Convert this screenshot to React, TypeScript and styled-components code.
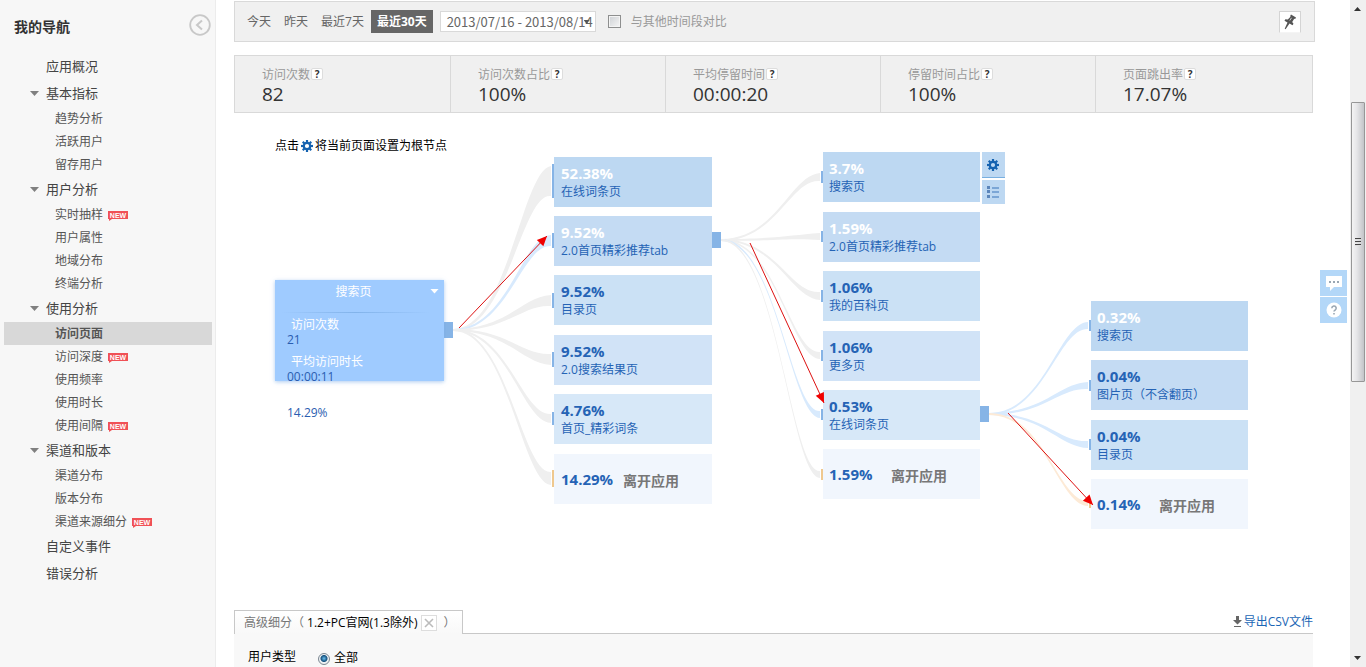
import React from 'react';
import styled, { createGlobalStyle } from 'styled-components';

const GlobalStyle = createGlobalStyle`
  * { box-sizing: border-box; }
  body {
    margin: 0;
    background: #fff;
    color: #000;
    font: 12px/15px "Open Sans", "Noto Sans CJK SC", sans-serif;
  }
  button, input { font: inherit; }
  a { color: inherit; text-decoration: none; }
`;

const Shell = styled.div`
  display: flex;
  height: 100vh;
  overflow: hidden;
`;

/* ---------- sidebar ---------- */

const Sidebar = styled.nav`
  flex: none;
  width: 216px;
  padding: 0 3px 0 4px;
  background: #f7f7f7;
  border-right: 1px solid #ececec;
`;

const SidebarHead = styled.div`
  display: flex;
  align-items: center;
  justify-content: space-between;
  height: 53px;
  padding: 0 1px 0 10px;
`;

const SidebarTitle = styled.h2`
  margin: 0;
  font-size: 14px;
  line-height: 20px;
  color: #333;
`;

const CollapseButton = styled.button`
  display: block;
  width: 22px;
  height: 22px;
  margin-bottom: 4px;
  padding: 0;
  border: 0;
  background: none;
`;

const NavList = styled.ul`
  margin: 0;
  padding: 0;
  list-style: none;
`;

const GroupLink = styled.a`
  display: flex;
  align-items: center;
  height: 27px;
  padding-left: 26px;
  gap: 6px;
  font-size: 13px;
  color: #444;
`;

const Caret = styled.span<{ $shown?: boolean }>`
  width: 9px;
  height: 5px;
  margin-right: 1px;
  background: ${(p) => (p.$shown ? '#808080' : 'transparent')};
  clip-path: polygon(0 0, 100% 0, 50% 100%);
`;

const SubLink = styled.a<{ $active?: boolean }>`
  display: flex;
  align-items: center;
  height: 23px;
  padding-left: 51px;
  gap: 5px;
  color: #555;
  font-weight: ${(p) => (p.$active ? 700 : 400)};
  background: ${(p) => (p.$active ? '#d8d8d8' : 'transparent')};
`;

const Badge = styled.svg`
  margin-top: 3px;
`;

type Group = { label: string; items?: { label: string; isNew?: boolean; active?: boolean }[] };

const groups: Group[] = [
  { label: '应用概况' },
  { label: '基本指标', items: [{ label: '趋势分析' }, { label: '活跃用户' }, { label: '留存用户' }] },
  {
    label: '用户分析',
    items: [{ label: '实时抽样', isNew: true }, { label: '用户属性' }, { label: '地域分布' }, { label: '终端分析' }],
  },
  {
    label: '使用分析',
    items: [
      { label: '访问页面', active: true },
      { label: '访问深度', isNew: true },
      { label: '使用频率' },
      { label: '使用时长' },
      { label: '使用间隔', isNew: true },
    ],
  },
  { label: '渠道和版本', items: [{ label: '渠道分布' }, { label: '版本分布' }, { label: '渠道来源细分', isNew: true }] },
  { label: '自定义事件' },
  { label: '错误分析' },
];

const NewBadge = () => (
  <Badge width="20" height="10" viewBox="0 0 20 10">
    <path d="M0 0h20v8H4l-3 2V8H0z" fill="#f05156" />
    <text x="10" y="7" fontSize="7" fontWeight="700" fill="#fff" textAnchor="middle" fontFamily="Liberation Sans, sans-serif">
      NEW
    </text>
  </Badge>
);

/* ---------- main column ---------- */

const Main = styled.main`
  flex: 1;
  min-width: 0;
  display: flex;
  flex-direction: column;
  padding: 1px 35px 0 18px;
`;

const Toolbar = styled.div`
  flex: none;
  display: flex;
  align-items: center;
  height: 41px;
  padding: 0 13px 0 6px;
  border: 1px solid #d9d9d9;
  background: #f0f0f0;
`;

const RangeButton = styled.button<{ $active?: boolean }>`
  height: 23px;
  margin-right: 1px;
  padding: 0 6px;
  border: 0;
  color: ${(p) => (p.$active ? '#fff' : '#666')};
  background: ${(p) => (p.$active ? '#666' : 'transparent')};
  font-weight: ${(p) => (p.$active ? 700 : 400)};
  white-space: nowrap;
`;

const DateButton = styled.button`
  position: relative;
  width: 156px;
  height: 21px;
  margin: 0 12px 0 6px;
  padding: 0 0 0 6px;
  border: 1px solid #d9d9d9;
  background: #fff;
  color: #666;
  font-family: "Noto Sans CJK SC", sans-serif;
  font-size: 13px;
  line-height: 18px;
  text-align: left;
  white-space: nowrap;
`;

const DateCaret = styled.span`
  position: absolute;
  right: 5px;
  top: 8px;
  width: 6px;
  height: 4px;
  background: #555;
  clip-path: polygon(0 0, 100% 0, 50% 100%);
`;

const CompareBox = styled.input`
  appearance: none;
  width: 13px;
  height: 13px;
  margin: 0 10px 0 0;
  border: 1px solid #8e8f8f;
  background: linear-gradient(135deg, #cdd0d4, #f6f6f6);
  box-shadow: inset 0 0 0 1px #f4f4f4;
`;

const CompareLabel = styled.label`
  display: flex;
  align-items: center;
  color: #999;
`;

const PinButton = styled.button`
  display: flex;
  align-items: center;
  justify-content: center;
  width: 22px;
  height: 22px;
  margin-left: auto;
  padding: 0;
  border: 1px solid #d4d4d4;
  border-bottom-color: #f4f4f4;
  background: #fff;
`;

const Content = styled.div`
  flex: 1;
  display: flex;
  flex-direction: column;
  margin-right: 2px;
`;

const Stats = styled.dl`
  flex: none;
  display: grid;
  grid-template-columns: repeat(4, 20fr) 21fr;
  grid-template-columns: repeat(4, minmax(0, 215fr)) minmax(0, 217fr);
  height: 58px;
  margin: 13px 0 0;
  border: 1px solid #d9d9d9;
  background: #f0f0f0;
`;

const Stat = styled.div`
  padding: 10px 0 0 27px;
  & + & { border-left: 1px solid #d9d9d9; }
`;

const StatLabel = styled.dt`
  display: flex;
  align-items: center;
  height: 16px;
  gap: 1px;
  color: #999;
`;

const HelpMark = styled.button`
  width: 12px;
  height: 12px;
  padding: 0;
  border: 1px solid #ddd;
  border-radius: 2px;
  background: #fff;
  color: #333;
  font-size: 10px;
  font-weight: 700;
  line-height: 10px;
`;

const StatValue = styled.dd`
  margin: 0;
  color: #333;
  font-size: 19px;
  line-height: 24px;
`;

const stats = [
  ['访问次数', '82'],
  ['访问次数占比', '100%'],
  ['平均停留时间', '00:00:20'],
  ['停留时间占比', '100%'],
  ['页面跳出率', '17.07%'],
];

/* ---------- flow diagram ---------- */

const Canvas = styled.section`
  position: relative;
  flex: none;
  height: 497px;
`;

const Hint = styled.p`
  display: flex;
  align-items: center;
  gap: 2px;
  margin: 0;
  padding: 25px 0 0 41px;
`;

const Links = styled.svg`
  position: absolute;
  left: 0;
  top: 0;
  width: 1079px;
  height: 497px;
  pointer-events: none;
`;

const Placed = styled.div<{ $x: number; $y: number }>`
  position: absolute;
  left: ${(p) => p.$x}px;
  top: ${(p) => p.$y}px;
`;

const RootNode = styled(Placed)`
  width: 169px;
  height: 101px;
  background: #9fcbff;
  box-shadow: 0 1px 4px rgba(120, 170, 230, 0.6);
`;

const RootTitle = styled.div`
  display: flex;
  align-items: center;
  height: 22px;
  padding: 0 5px 0 2px;
  color: #fff;
  & > span:first-child { flex: 1; text-align: center; }
`;

const RootCaret = styled.span`
  width: 9px;
  height: 5px;
  background: #fff;
  clip-path: polygon(0 0, 100% 0, 50% 100%);
`;

const RootRule = styled.div`
  height: 1px;
  margin: 10px 14px 4px 6px;
  background: linear-gradient(90deg, transparent, #82b3ea 50%, transparent);
`;

const RootData = styled.dl`
  margin: 0;
  padding-left: 12px;
`;

const RootLabel = styled.dt`
  padding-left: 4px;
  color: #fff;
`;

const RootValue = styled.dd<{ $gap: number }>`
  margin: 0 0 ${(p) => p.$gap}px;
  color: #2a5db0;
`;

const Node = styled(Placed)<{ $bg: string; $width: number; $inset: number }>`
  width: ${(p) => p.$width}px;
  height: 50px;
  padding: 7px 0 0 ${(p) => p.$inset}px;
  background: ${(p) => p.$bg};
`;

const Percent = styled.div<{ $light?: boolean }>`
  color: ${(p) => (p.$light ? '#fff' : '#2563b5')};
  font-size: 15px;
  font-weight: 700;
  line-height: 18px;
`;

const PageName = styled.div`
  color: #2563b5;
  line-height: 20px;
  white-space: nowrap;
`;

const ExitNode = styled(Node)`
  display: flex;
  align-items: center;
  padding-top: 0;
  ${Percent} { width: 62px; }
`;

const ExitLabel = styled.div`
  padding-top: 4px;
  color: #777;
  font-size: 14px;
  font-weight: 700;
  line-height: 18px;
`;

const NodeTools = styled(Placed)`
  display: flex;
  flex-direction: column;
  gap: 2px;
`;

const ToolButton = styled.button<{ $underlined?: boolean }>`
  display: flex;
  align-items: center;
  justify-content: center;
  width: 23px;
  height: ${(p) => (p.$underlined ? 26 : 24)}px;
  padding: 0 1px 0 0;
  border: 0;
  border-bottom: ${(p) => (p.$underlined ? '1px solid #78afe0' : '0')};
  background: #bdd8f2;
`;

type FlowNode = { y: number; pct: string; name: string; port: [number, number]; light?: boolean; exit?: boolean; stream?: boolean };
type Column = { x: number; width: number; inset: number; from: [number, number]; spread: number; tint?: string; nodes: FlowNode[] };

const shades = ['#bdd8f2', '#c4dbf3', '#cbe1f5', '#d1e3f7', '#d7e8f8'];

const columns: Column[] = [
  {
    x: 320,
    width: 158,
    inset: 7,
    from: [219, 217],
    spread: 0.7,
    nodes: [
      { y: 44, pct: '52.38%', name: '在线词条页', port: [51, 85], light: true },
      { y: 103, pct: '9.52%', name: '2.0首页精彩推荐tab', port: [120, 135], light: true, stream: true },
      { y: 162, pct: '9.52%', name: '目录页', port: [180, 195] },
      { y: 222, pct: '9.52%', name: '2.0搜索结果页', port: [239, 254] },
      { y: 281, pct: '4.76%', name: '首页_精彩词条', port: [299, 312] },
      { y: 341, pct: '14.29%', name: '离开应用', port: [357, 374], exit: true },
    ],
  },
  {
    x: 589,
    width: 157,
    inset: 6,
    from: [487, 127],
    spread: 0.4,
    nodes: [
      { y: 39, pct: '3.7%', name: '搜索页', port: [58, 70], light: true },
      { y: 99, pct: '1.59%', name: '2.0首页精彩推荐tab', port: [118, 129], light: true },
      { y: 158, pct: '1.06%', name: '我的百科页', port: [177, 189] },
      { y: 218, pct: '1.06%', name: '更多页', port: [237, 248] },
      { y: 277, pct: '0.53%', name: '在线词条页', port: [296, 307], stream: true },
      { y: 336, pct: '1.59%', name: '离开应用', port: [356, 367], exit: true },
    ],
  },
  {
    x: 857,
    width: 157,
    inset: 6,
    from: [755, 301],
    spread: 0.6,
    tint: '#fdead6',
    nodes: [
      { y: 188, pct: '0.32%', name: '搜索页', port: [207, 218], light: true, stream: true },
      { y: 247, pct: '0.04%', name: '图片页（不含翻页）', port: [267, 278], stream: true },
      { y: 307, pct: '0.04%', name: '目录页', port: [326, 337], stream: true },
      { y: 366, pct: '0.14%', name: '离开应用', port: [386, 395], exit: true },
    ],
  },
];

/* A ribbon that leaves its source as a thin strand and widens into the port. */
const ribbon = ([sx, sy]: [number, number], ex: number, [p0, p1]: [number, number], spread: number) => {
  const top = p0 + 2;
  const bottom = p1 - 2;
  const mid = (top + bottom) / 2;
  const half = ((bottom - top) / 2) * spread;
  const a = sx + (ex - sx) * 0.56;
  const b = sx + (ex - sx) * 0.7;
  return `M${sx} ${sy - 1}C${a} ${sy - 1} ${b} ${mid - half} ${ex} ${top}V${bottom}C${b} ${mid + half} ${a} ${sy + 1} ${sx} ${sy + 1}Z`;
};

const arrows = [
  [225, 215, 313, 123],
  [516, 130, 590, 290],
  [774, 300, 859, 392],
];

const Arrow = ({ p: [x1, y1, x2, y2] }: { p: number[] }) => {
  const angle = (Math.atan2(y2 - y1, x2 - x1) * 180) / Math.PI;
  return (
    <g>
      <line x1={x1} y1={y1} x2={x2} y2={y2} stroke="#dd1010" />
      <path d="M0 0L-10 -4.5V4.5Z" fill="#f00000" transform={`translate(${x2} ${y2}) rotate(${angle})`} />
    </g>
  );
};

const Gear = ({ size = 12 }: { size?: number }) => (
  <svg width={size} height={size} viewBox="0 0 12 12">
    <circle cx="6" cy="6" r="3.2" fill="none" stroke="#1462b0" strokeWidth="2.2" />
    {[0, 45, 90, 135, 180, 225, 270, 315].map((r) => (
      <rect key={r} x="4.9" y="0" width="2.2" height="2.4" fill="#1462b0" transform={`rotate(${r} 6 6)`} />
    ))}
  </svg>
);

/* ---------- segmentation panel ---------- */

const TabRow = styled.div`
  flex: none;
  display: flex;
  height: 24px;
`;

const Tab = styled.div`
  display: flex;
  align-items: center;
  width: 229px;
  padding-left: 9px;
  border: 1px solid #c8c8c8;
  border-bottom: 0;
  background: linear-gradient(#fff, #f8f8f8);
  color: #777;
  white-space: nowrap;
`;

const TabName = styled.span`
  margin-left: 3px;
  color: #000;
`;

const RemoveButton = styled.button`
  display: flex;
  align-items: center;
  justify-content: center;
  width: 16px;
  height: 16px;
  margin: 0 6px 0 4px;
  padding: 0;
  border: 1px solid #ddd;
  background: #fff;
`;

const TabRest = styled.div`
  flex: 1;
  display: flex;
  align-items: center;
  justify-content: flex-end;
  border-bottom: 1px solid #c8c8c8;
`;

const ExportLink = styled.a`
  display: flex;
  align-items: center;
  gap: 2px;
  color: #1b66b5;
`;

const Panel = styled.fieldset`
  flex: 1;
  display: flex;
  align-items: flex-start;
  margin: 0;
  padding: 15px 0 0 14px;
  border: 0;
  background: #f8f8f8;
`;

const PanelLabel = styled.span`
  width: 70px;
`;

const RadioLabel = styled.label`
  display: flex;
  align-items: center;
  gap: 4px;
`;

const Radio = styled.input`
  appearance: none;
  width: 12px;
  height: 12px;
  margin: 4px 0 0;
  border: 1px solid #7b8791;
  border-radius: 50%;
  background: radial-gradient(circle at 50% 45%, #6cc0ee 0, #14507e 3px, #14507e 3px, #eef1f3 4px);
`;

/* ---------- window edge ---------- */

const Scrollbar = styled.div`
  flex: none;
  display: flex;
  flex-direction: column;
  width: 16px;
  padding: 0 1px;
  background: #f0f0f0;
`;

const ScrollArrow = styled.span<{ $up?: boolean }>`
  width: 7px;
  height: 4px;
  margin: ${(p) => (p.$up ? '7px 3px 6px' : '6px 3px 7px')};
  background: #333;
  clip-path: ${(p) => (p.$up ? 'polygon(50% 0, 100% 100%, 0 100%)' : 'polygon(0 0, 100% 0, 50% 100%)')};
`;

const TrackSpace = styled.div<{ $grow: number }>`
  flex: ${(p) => p.$grow} 1 0;
`;

const Thumb = styled.div`
  flex: 279 1 0;
  display: flex;
  flex-direction: column;
  align-items: center;
  justify-content: center;
  gap: 1px;
  border: 1px solid #979797;
  border-radius: 1px;
  background: linear-gradient(90deg, #f4f4f4, #e6e6e8 40%, #c3c4c8);
`;

const Grip = styled.span`
  width: 6px;
  height: 2px;
  background: linear-gradient(#444 50%, #ddd 50%);
`;

const Floating = styled.aside`
  position: fixed;
  right: 19px;
  top: 270px;
  display: flex;
  flex-direction: column;
  gap: 1px;
`;

const FloatButton = styled.button`
  display: flex;
  align-items: center;
  justify-content: center;
  width: 27px;
  height: 26px;
  padding: 0;
  border: 0;
  background: #b3d7f8;
`;

export default function App() {
  return (
    <>
      <GlobalStyle />
      <Shell>
        <Sidebar>
          <SidebarHead>
            <SidebarTitle>我的导航</SidebarTitle>
            <CollapseButton aria-label="收起">
              <svg width="22" height="22" viewBox="0 0 22 22" fill="none" stroke="#c8c8c8">
                <circle cx="11" cy="11" r="9.8" strokeWidth="1.8" />
                <path d="M13 6.5L8 11l5 4.500" strokeWidth="2" />
              </svg>
            </CollapseButton>
          </SidebarHead>
          <NavList>
            {groups.map((g) => (
              <li key={g.label}>
                <GroupLink href="#">
                  <Caret $shown={!!g.items} />
                  {g.label}
                </GroupLink>
                {g.items && (
                  <NavList>
                    {g.items.map((i) => (
                      <li key={i.label}>
                        <SubLink href="#" $active={i.active}>
                          {i.label}
                          {i.isNew && <NewBadge />}
                        </SubLink>
                      </li>
                    ))}
                  </NavList>
                )}
              </li>
            ))}
          </NavList>
        </Sidebar>

        <Main>
          <Toolbar>
            <RangeButton>今天</RangeButton>
            <RangeButton>昨天</RangeButton>
            <RangeButton>最近7天</RangeButton>
            <RangeButton $active>最近30天</RangeButton>
            <DateButton>
              2013/07/16 - 2013/08/14
              <DateCaret />
            </DateButton>
            <CompareLabel>
              <CompareBox type="checkbox" />
              与其他时间段对比
            </CompareLabel>
            <PinButton aria-label="固定">
              <svg width="14" height="16" viewBox="0 0 14 16" fill="#555">
                <path d="M8 .5L13 3.500l-.8 1.600-1-.3L9.200 8l1.300 1.800-1 1.500-3-1.800L2.600 15.200l-.9-.4L4.500 8.500 1.500 6.800l.9-1.500 2.400.3L7.500 2.800 7.200 1.900z" />
                <path d="M8.500 3.800L6.800 6.500" stroke="#ccc" strokeWidth="1" />
              </svg>
            </PinButton>
          </Toolbar>

          <Content>
            <Stats>
              {stats.map(([label, value]) => (
                <Stat key={label}>
                  <StatLabel>
                    {label}
                    <HelpMark>?</HelpMark>
                  </StatLabel>
                  <StatValue>{value}</StatValue>
                </Stat>
              ))}
            </Stats>

            <Canvas>
              <Hint>
                点击
                <Gear />
                将当前页面设置为根节点
              </Hint>

              <Links viewBox="0 0 1079 497">
                {columns.map((c) =>
                  c.nodes.map((n) => (
                    <path
                      key={`${c.x}-${n.y}`}
                      d={ribbon(c.from, c.x - 3, n.port, c.spread)}
                      fill={n.stream ? '#d8eafd' : c.tint ?? '#efefef'}
                    />
                  )),
                )}
                {columns.map((c) =>
                  c.nodes.map((n) => (
                    <rect
                      key={`${c.x}-${n.y}`}
                      x={c.x - 2}
                      y={n.port[0]}
                      width="2"
                      height={n.port[1] - n.port[0]}
                      fill={n.exit ? '#efc88e' : '#86b4e6'}
                    />
                  )),
                )}
                {columns.map((c) => (
                  <rect key={c.x} x={c.from[0] - 9} y={c.from[1] - 8} width="9" height="16" fill="#86b4e6" />
                ))}
              </Links>

              <RootNode $x={41} $y={167}>
                <RootTitle>
                  <span>搜索页</span>
                  <RootCaret />
                </RootTitle>
                <RootRule />
                <RootData>
                  <RootLabel>访问次数</RootLabel>
                  <RootValue $gap={7}>21</RootValue>
                  <RootLabel>平均访问时长</RootLabel>
                  <RootValue $gap={21}>00:00:11</RootValue>
                  <RootValue $gap={0}>14.29%</RootValue>
                </RootData>
              </RootNode>

              {columns.map((c) =>
                c.nodes.map((n, i) =>
                  n.exit ? (
                    <ExitNode key={n.y} $x={c.x} $y={n.y} $width={c.width} $inset={c.inset} $bg="#f1f6fd">
                      <Percent>{n.pct}</Percent>
                      <ExitLabel>{n.name}</ExitLabel>
                    </ExitNode>
                  ) : (
                    <Node key={n.y} $x={c.x} $y={n.y} $width={c.width} $inset={c.inset} $bg={shades[i]}>
                      <Percent $light={n.light}>{n.pct}</Percent>
                      <PageName>{n.name}</PageName>
                    </Node>
                  ),
                ),
              )}

              <NodeTools $x={748} $y={39}>
                <ToolButton $underlined aria-label="设为根节点">
                  <Gear />
                </ToolButton>
                <ToolButton aria-label="详情">
                  <svg width="12" height="12" viewBox="0 0 12 12">
                    {[0, 4, 9].map((y) => (
                      <g key={y}>
                        <rect x="0" y={y} width="3" height="3" fill="#5c86bb" />
                        <rect x="5" y={y + 1} width="7" height="2" fill="#7ba6d6" />
                      </g>
                    ))}
                  </svg>
                </ToolButton>
              </NodeTools>

              <Links viewBox="0 0 1079 497">
                {arrows.map((p) => (
                  <Arrow key={p[0]} p={p} />
                ))}
              </Links>
            </Canvas>

            <TabRow>
              <Tab>
                高级细分（
                <TabName>1.2+PC官网(1.3除外)</TabName>
                <RemoveButton aria-label="移除">
                  <svg width="10" height="10" viewBox="0 0 10 10" stroke="#bbb" strokeWidth="1.6">
                    <path d="M1 1l8 8M9 1L1 9" />
                  </svg>
                </RemoveButton>
                ）
              </Tab>
              <TabRest>
                <ExportLink href="#">
                  <svg width="9" height="11" viewBox="0 0 9 11" fill="#666">
                    <path d="M3 0h3v4h3L4.500 8.500 0 4h3zM1 10h7v1H1z" />
                  </svg>
                  导出CSV文件
                </ExportLink>
              </TabRest>
            </TabRow>
            <Panel>
              <PanelLabel>用户类型</PanelLabel>
              <RadioLabel>
                <Radio type="radio" name="userType" defaultChecked />
                全部
              </RadioLabel>
            </Panel>
          </Content>
        </Main>

        <Scrollbar>
          <ScrollArrow $up />
          <TrackSpace $grow={85} />
          <Thumb>
            <Grip />
            <Grip />
            <Grip />
          </Thumb>
          <TrackSpace $grow={269} />
          <ScrollArrow />
        </Scrollbar>
      </Shell>

      <Floating>
        <FloatButton aria-label="反馈">
          <svg width="18" height="17" viewBox="0 0 18 17">
            <path d="M1 1h16v11H9l-4 4v-4H1z" fill="#fff" />
            <path d="M4 6h2v2H4zM8 6h2v2H8zM12 6h2v2h-2z" fill="#9aa7b3" />
          </svg>
        </FloatButton>
        <FloatButton aria-label="帮助">
          <svg width="16" height="16" viewBox="0 0 16 16">
            <circle cx="8" cy="8" r="7.500" fill="#fff" />
            <path d="M5.800 6.200a2.200 2.200 0 1 1 3.200 2q-1 .5-1 1.400M8 11v1.600" fill="none" stroke="#9aa7b3" strokeWidth="1.600" />
          </svg>
        </FloatButton>
      </Floating>
    </>
  );
}
